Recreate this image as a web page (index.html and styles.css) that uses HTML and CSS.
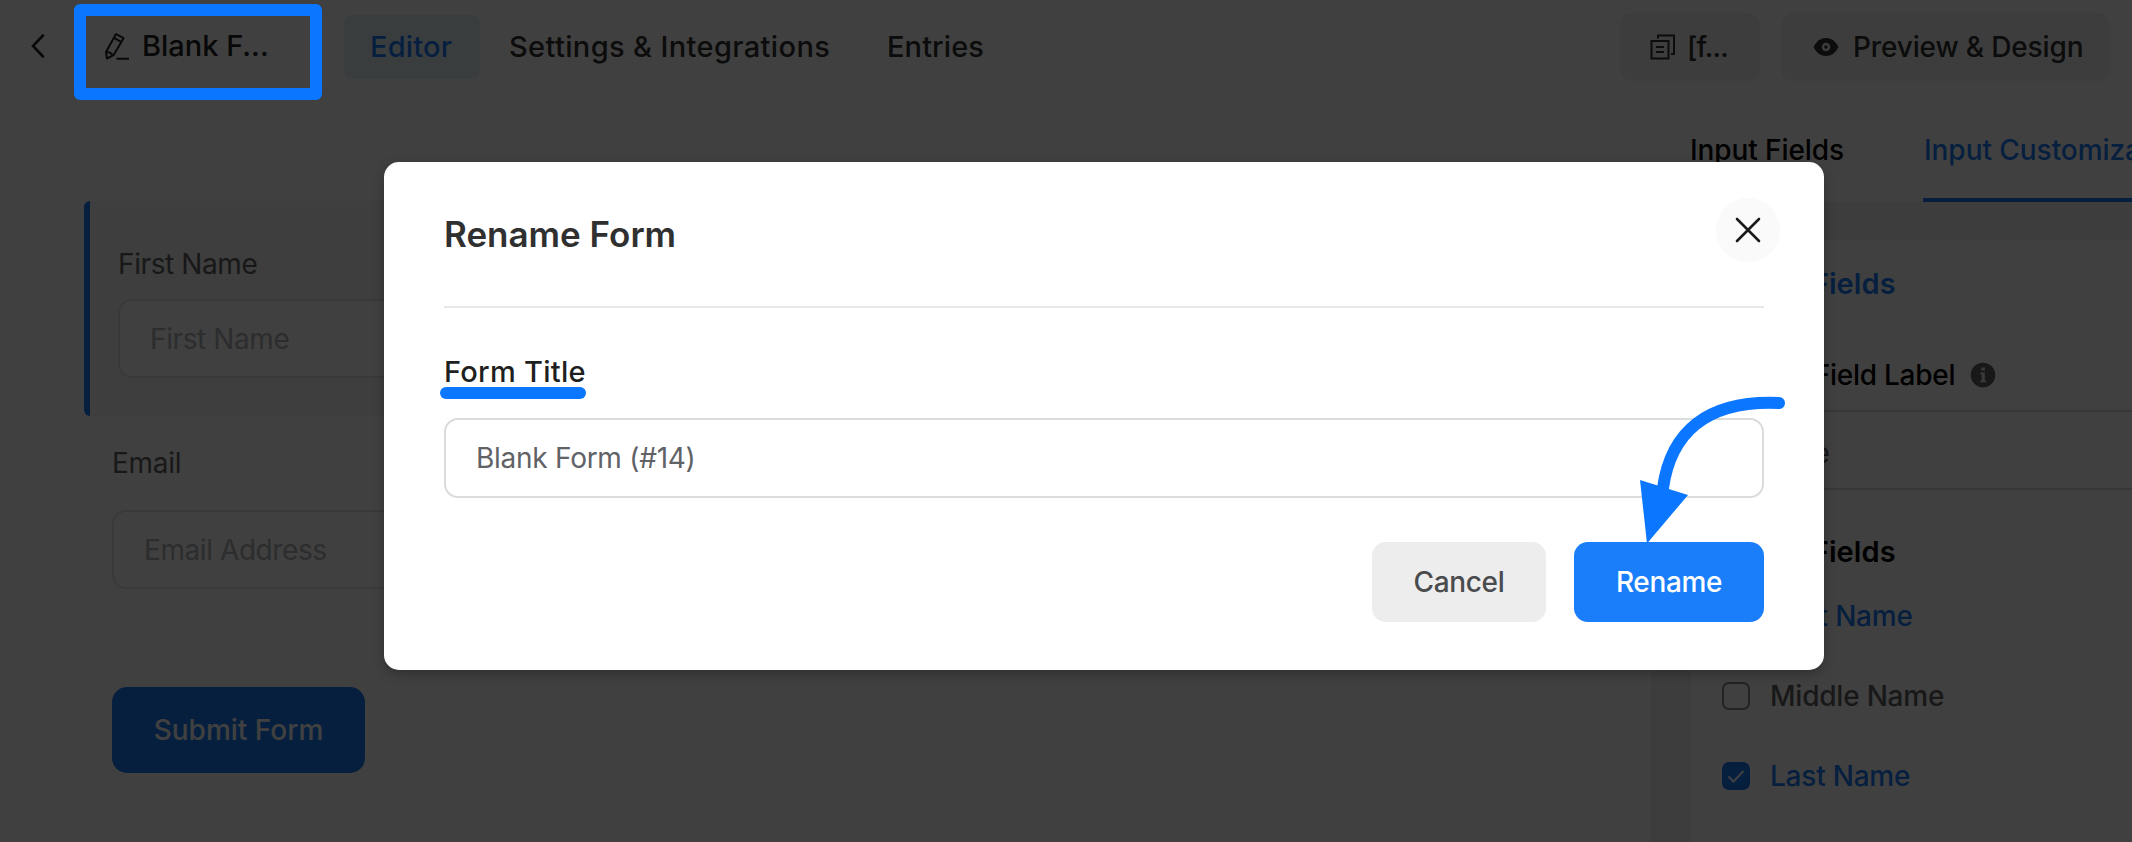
FILE: index.html
```html
<!DOCTYPE html>
<html lang="en">
<head>
<meta charset="utf-8">
<title>Rename Form</title>
<link rel="stylesheet" href="styles.css">
</head>
<body>
<div class="app">
  <header class="topbar">
    <svg class="back" width="14" height="24" viewBox="0 0 14 24"><path d="M12 1.5 2 12l10 10.500"/></svg>
    <div class="form-name">
      <svg width="26" height="28" viewBox="0 0 26 28"><path d="M2 20 12 2l7.500 4.200L9.500 23.200 3 26.500zM10 5.800l7.500 4.200M2 20q4-.5 7 3.500M12.500 26.700H25"/></svg>
      <span>Blank F...</span>
    </div>
    <nav class="nav">
      <a class="nav-item active"><span class="t-editor">Editor</span></a>
      <a class="nav-item"><span class="t-settings">Settings &amp; Integrations</span></a>
      <a class="nav-item"><span class="t-entries">Entries</span></a>
    </nav>
    <div class="actions">
      <div class="action code">
        <svg width="26" height="26" viewBox="0 0 26 26"><path class="ln" d="M1.500 7H18.500V24.500H1.500zM8 4.500V1.500H24V20H21M6 13h8M6 18h8"/></svg>
        <span class="t-code">[f...</span>
      </div>
      <div class="action preview">
        <svg width="26" height="20" viewBox="0 0 26 20"><path d="M.5 10Q5 1 13 1T25.500 10Q21 19 13 19T.5 10z"/><circle class="ring" cx="13" cy="10" r="3"/></svg>
        <span class="t-preview">Preview &amp; Design</span>
      </div>
    </div>
  </header>
  <div class="workspace">
    <main class="canvas">
      <section class="block selected">
        <label class="t-first">First Name</label>
        <div class="input"><span class="t-first">First Name</span></div>
      </section>
      <section class="block email">
        <label class="t-email">Email</label>
        <div class="input"><span class="t-address">Email Address</span></div>
      </section>
      <div class="submit"><span class="t-submit">Submit Form</span></div>
    </main>
    <aside class="side">
      <div class="tabs">
        <div class="tab"><span class="t-input">Input Fields</span></div>
        <div class="tab current"><span class="t-custom">Input Customization</span></div>
      </div>
      <div class="card">
        <div class="card-title"><span class="t-card">Name Fields</span></div>
        <div class="field-label"><span class="t-admin">Admin Field Label</span>
          <svg width="26" height="26" viewBox="0 0 26 26"><circle class="info" cx="13" cy="13" r="12.300"/><path class="i" d="M11.400 5.500h3.400v3h-3.400zM10.200 10.500h4.600v8h1.400v1.800h-6v-1.800h1.500v-6.200h-1.500z"/></svg>
        </div>
        <div class="side-input"><span>Name</span></div>
        <div class="group-title"><span class="t-group">Name Fields</span></div>
        <div class="check on"><i><svg width="28" height="28" viewBox="0 0 28 28"><path d="m6.500 14.500 5 5L21.500 9"/></svg></i><span class="t-check">First Name</span></div>
        <div class="check"><i></i><span class="t-check">Middle Name</span></div>
        <div class="check on"><i><svg width="28" height="28" viewBox="0 0 28 28"><path d="m6.500 14.500 5 5L21.500 9"/></svg></i><span class="t-check">Last Name</span></div>
      </div>
    </aside>
  </div>
</div>
<div class="overlay">
  <div class="modal">
    <div class="modal-head">
      <h1>Rename Form</h1>
      <div class="close"><svg width="26" height="26" viewBox="0 0 26 26"><path d="M2 2 24 24M24 2 2 24"/></svg></div>
    </div>
    <div class="title-label"><span class="t-title">Form Title</span></div>
    <div class="title-input"><span class="t-value">Blank Form (#14)</span></div>
    <div class="buttons">
      <div class="btn cancel"><span>Cancel</span></div>
      <div class="btn rename"><span>Rename</span></div>
    </div>
  </div>
</div>
<div class="mark-box"></div>
<div class="mark-line"></div>
<svg class="mark-arrow" width="160" height="160" viewBox="1635 390 160 160"><path class="curve" d="M1779 403C1708 400 1671 431 1663 488"/><path class="head" d="M1640 480 1688 495 1647 543.500z"/></svg>
</body>
</html>
```

FILE: styles.css
```css
* { box-sizing: border-box; }
html, body { margin: 0; height: 842px; overflow: hidden; }
body { position: relative; font-family: Inter, "Liberation Sans", sans-serif; font-size: 28px; line-height: 40px; color: #000; background: #fff; }
span, label { white-space: nowrap; }
svg { display: block; flex: none; overflow: visible; }
.app { width: 2132px; height: 842px; overflow: hidden; display: flex; flex-direction: column; }

.topbar { flex: none; height: 100px; display: flex; align-items: flex-start; font-weight: 500; }
.back { margin: 34px 0 0 31px; fill: none; stroke: #222; stroke-width: 2.600; stroke-linecap: round; }
.form-name { width: 180px; margin: 26px 0 0 59px; display: flex; align-items: center; gap: 12px; font-size: 29px; color: #222; }
.form-name svg { fill: none; stroke: #222; stroke-width: 2; stroke-linejoin: round; }
.nav { display: flex; margin: 15px 0 0 60px; font-size: 29px; color: #303030; }
.nav-item { height: 64px; padding: 12px 26px 0; border-radius: 8px; }
.nav-item.active { width: 136px; background: #e6f1f8; color: #1a7efb; }
.t-editor { letter-spacing: .2px; }
.nav-item:nth-child(2) { width: 381px; padding-left: 29px; }
.t-settings { letter-spacing: .37px; }
.t-entries { letter-spacing: .1px; }
.actions { display: flex; gap: 21px; margin: 13px 22px 0 auto; color: #303030; }
.action { height: 68px; border-radius: 12px; background: #f2f2f2; display: flex; align-items: center; }
.action .ln { fill: none; stroke: #303030; stroke-width: 2; }
.action svg { fill: #303030; }
.action .ring { fill: none; stroke: #eee; stroke-width: 2.500; }
.code { width: 140px; padding-left: 30px; gap: 11px; }
.t-code { letter-spacing: -.8px; }
.preview { width: 329px; padding-left: 32px; gap: 14px; }
.t-preview { letter-spacing: -.15px; }

.workspace { flex: 1; display: flex; }
.canvas { flex: none; width: 1651px; padding: 101px 26px 0 84px; color: #606266; }
.canvas label { display: block; color: #606266; }
.t-first { letter-spacing: -.4px; }
.t-email { letter-spacing: -.3px; }
.t-address { letter-spacing: -.42px; }
.input { height: 79px; margin-top: 15px; border: 2px solid #e2e3e5; border-radius: 14px; padding: 18px 30px; color: #b0b2b6; background: #fff; }
.block.selected { height: 215px; border-left: 6px solid #1a7efb; border-radius: 6px; padding: 43px 28px 0; background: #f6f6f6; }
.email { padding: 27px 28px 0; }
.email .input { margin-top: 27px; }
.submit { width: 253px; height: 86px; margin: 98px 0 0 28px; border-radius: 15px; background: #1a7efb; color: #fff; font-weight: 500; display: flex; align-items: center; justify-content: center; }
.side { flex: none; width: 640px; background: #f4f4f4; }
.tabs { height: 102px; display: flex; background: #fff; font-weight: 500; overflow: hidden; }
.tab { flex: none; width: 272px; padding: 30px 0 0 39px; letter-spacing: -.1px; }
.tab.current { width: 310px; padding-left: 1px; color: #1a7efb; border-bottom: 4px solid #1a7efb; letter-spacing: -.05px; }
.card { margin: 38px 40px 0 40px; height: 620px; padding: 24px 31px 0; background: #fff; }
.card-title { color: #1a7efb; font-weight: 600; font-size: 29px; }
.t-card, .t-group { letter-spacing: .1px; }
.field-label { display: flex; align-items: center; gap: 15px; margin-top: 51px; font-weight: 500; }
.t-admin { letter-spacing: -.25px; }
.info { fill: #606266; }
.i { fill: #e8e8e8; }
.side-input { height: 80px; margin-top: 15px; border: 2px solid #dadbdd; border-radius: 14px; padding: 21px 30px; color: #606266; letter-spacing: -.6px; }
.group-title { margin-top: 42px; font-weight: 600; font-size: 29px; }
.check { display: flex; align-items: center; gap: 20px; height: 40px; margin-bottom: 40px; color: #606266; font-weight: 500; }
.t-check { letter-spacing: -.22px; }
.group-title + .check { margin-top: 24px; }
.check i { width: 28px; height: 28px; border: 2px solid #8a8a8a; border-radius: 7px; }
.check.on { color: #1a7efb; }
.check.on i { border: 0; background: #1a7efb; }
.check path { fill: none; stroke: #fff; stroke-width: 2; }

.overlay { position: absolute; inset: 0; background: rgba(0, 0, 0, .75); display: flex; justify-content: center; align-items: flex-start; padding: 162px 0 0 76px; }
.modal { width: 1440px; height: 508px; padding: 0 60px; border-radius: 15px; background: #fff; box-shadow: 0 4px 12px rgba(0, 0, 0, .25); }
.modal-head { height: 146px; border-bottom: 2px solid #e8e8e8; display: flex; justify-content: space-between; }
h1 { margin: 52px 0 0; font-size: 35px; line-height: 40px; font-weight: 600; color: #303030; white-space: nowrap; }
.close { width: 64px; height: 64px; margin: 36px -16px 0 0; border-radius: 50%; background: #fafafa; display: flex; align-items: center; justify-content: center; }
.close path { stroke: #1b1b1b; stroke-width: 2.600; stroke-linecap: round; }
.title-label { margin-top: 44px; font-size: 29px; font-weight: 500; color: #1e1f21; }
.t-title { letter-spacing: .27px; }
.title-input { height: 80px; margin-top: 26px; border: 2px solid #dadbdd; border-radius: 14px; padding: 18px 30px; color: #606266; }
.t-value { letter-spacing: -.27px; }
.buttons { display: flex; justify-content: flex-end; gap: 28px; margin-top: 44px; font-weight: 500; letter-spacing: -.35px; }
.btn { height: 80px; border-radius: 14px; display: flex; align-items: center; justify-content: center; }
.cancel { width: 174px; background: #ededed; color: #4a4b4d; }
.rename { width: 190px; background: #1a7efb; color: #fff; }

/* Annotations drawn over the dialog */
.mark-box { position: absolute; left: 74px; top: 4px; width: 248px; height: 96px; border: 12px solid #0b76ff; border-radius: 6px; }
.mark-line { position: absolute; left: 440px; top: 387px; width: 146px; height: 12px; border-radius: 6px; background: #0b76ff; }
.mark-arrow { position: absolute; left: 1635px; top: 390px; }
.curve { fill: none; stroke: #0b76ff; stroke-width: 12; stroke-linecap: round; }
.head { fill: #0b76ff; }
```
